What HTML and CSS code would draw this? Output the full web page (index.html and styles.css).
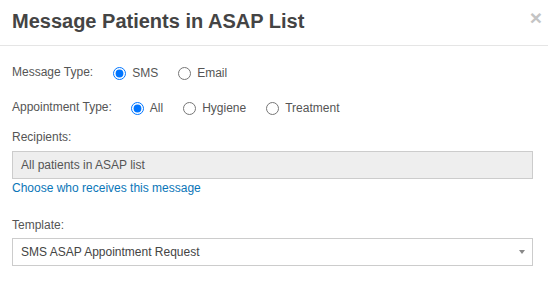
FILE: index.html
```html
<!DOCTYPE html>
<html lang="en">
<head>
    <meta charset="UTF-8">
    <meta name="viewport" content="width=device-width, initial-scale=1.0">
    <title>Message Patients in ASAP List</title>
    <link rel="stylesheet" href="styles.css">
</head>
<body>
    <div class="modal">
        <div class="modal-header">
            <h1>Message Patients in ASAP List</h1>
            <span class="close">&times;</span>
        </div>
        <div class="modal-body">
            <div class="radio-row">
                <span class="row-label">Message Type:</span>
                <label class="radio"><input type="radio" name="msgtype" checked> SMS</label>
                <label class="radio"><input type="radio" name="msgtype"> Email</label>
            </div>
            <div class="radio-row">
                <span class="row-label">Appointment Type:</span>
                <label class="radio"><input type="radio" name="appt" checked> All</label>
                <label class="radio"><input type="radio" name="appt"> Hygiene</label>
                <label class="radio"><input type="radio" name="appt"> Treatment</label>
            </div>

            <div class="field-label">Recipients:</div>
            <div class="readonly-box">All patients in ASAP list</div>
            <a class="link" href="#">Choose who receives this message</a>

            <div class="field-label template-label">Template:</div>
            <div class="select-box">
                <span>SMS ASAP Appointment Request</span>
                <span class="caret"></span>
            </div>
        </div>
    </div>
</body>
</html>
```

FILE: styles.css
```css
body {
    margin: 0;
    background: #fff;
    font-family: "Liberation Sans", Arial, sans-serif;
    font-size: 12px;
    color: #555;
}

.modal-header {
    display: flex;
    justify-content: space-between;
    align-items: flex-start;
    height: 46px;
    padding: 0 6px 0 12px;
    border-bottom: 1px solid #e5e5e5;
    box-sizing: border-box;
}

.modal-header h1 {
    margin: 0;
    padding-top: 10px;
    font-size: 20px;
    line-height: 22px;
    color: #444;
}

.close {
    font-size: 21px;
    font-weight: bold;
    line-height: 18px;
    padding-top: 9px;
    color: #c4c4c4;
}

.modal-body {
    padding: 17px 15px 20px 12px;
}

.radio-row {
    display: flex;
    align-items: center;
    height: 20px;
}

.radio-row + .radio-row {
    margin-top: 15px;
}

.row-label {
    margin-right: 20px;
    position: relative;
    top: -1px;
}

.radio-row:nth-child(2) .row-label {
    margin-right: 19px;
}

.radio {
    display: flex;
    align-items: center;
    margin-right: 20px;
    color: #555;
}

.radio input {
    margin: 0 6px 0 0;
    width: 13px;
    height: 13px;
}

.field-label {
    line-height: 14px;
    margin-top: 12px;
    margin-bottom: 7px;
}

.readonly-box {
    height: 28px;
    box-sizing: border-box;
    border: 1px solid #ccc;
    background: #eee;
    padding: 0 8px;
    line-height: 26px;
    color: #555;
}

.link {
    display: block;
    margin-top: 2px;
    line-height: 14px;
    color: #0a76b8;
    text-decoration: none;
}

.template-label {
    margin-top: 23px;
    margin-bottom: 6px;
}

.select-box {
    display: flex;
    justify-content: space-between;
    align-items: center;
    height: 28px;
    box-sizing: border-box;
    border: 1px solid #ccc;
    background: #fff;
    padding: 0 7px 0 8px;
    color: #444;
}

.caret {
    width: 0;
    height: 0;
    border-left: 3px solid transparent;
    border-right: 3px solid transparent;
    border-top: 4px solid #888;
}
```
